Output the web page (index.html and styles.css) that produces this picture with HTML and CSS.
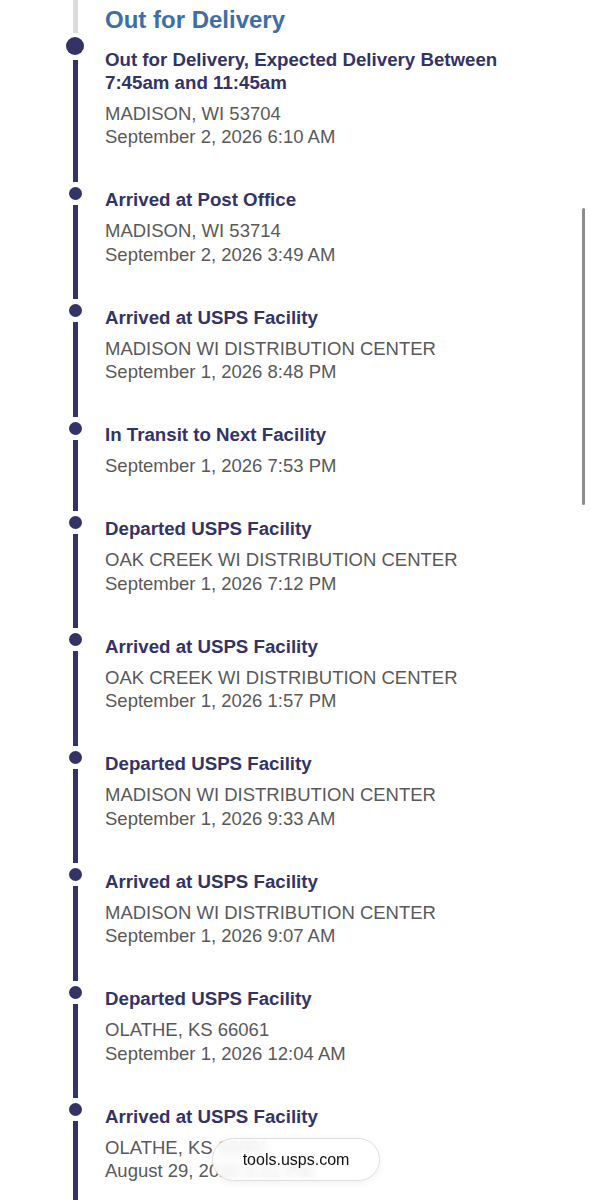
FILE: index.html
```html
<!DOCTYPE html>
<html lang="en">
<head>
    <meta charset="UTF-8">
    <meta name="viewport" content="width=device-width, initial-scale=1.0">
    <title>USPS Tracking</title>
    <link rel="stylesheet" href="styles.css">
</head>
<body>

    <section class="tracking">
        <!-- current status -->
        <div class="status-row">
            <div class="rail"><span class="rail-line rail-line--done"></span></div>
            <h2 class="status-title">Out for Delivery</h2>
        </div>

        <ol class="events">
            <li class="event event--current">
                <div class="rail">
                    <span class="dot"></span>
                    <span class="rail-line"></span>
                </div>
                <div class="event-body">
                    <p class="event-title">Out for Delivery, Expected Delivery Between 7:45am and 11:45am</p>
                    <p class="event-text">MADISON, WI 53704</p>
                    <p class="event-text">September 2, 2026 6:10 AM</p>
                </div>
            </li>

            <li class="event">
                <div class="rail">
                    <span class="dot"></span>
                    <span class="rail-line"></span>
                </div>
                <div class="event-body">
                    <p class="event-title">Arrived at Post Office</p>
                    <p class="event-text">MADISON, WI 53714</p>
                    <p class="event-text">September 2, 2026 3:49 AM</p>
                </div>
            </li>

            <li class="event">
                <div class="rail">
                    <span class="dot"></span>
                    <span class="rail-line"></span>
                </div>
                <div class="event-body">
                    <p class="event-title">Arrived at USPS Facility</p>
                    <p class="event-text">MADISON WI DISTRIBUTION CENTER</p>
                    <p class="event-text">September 1, 2026 8:48 PM</p>
                </div>
            </li>

            <li class="event">
                <div class="rail">
                    <span class="dot"></span>
                    <span class="rail-line"></span>
                </div>
                <div class="event-body">
                    <p class="event-title">In Transit to Next Facility</p>
                    <p class="event-text">September 1, 2026 7:53 PM</p>
                </div>
            </li>

            <li class="event">
                <div class="rail">
                    <span class="dot"></span>
                    <span class="rail-line"></span>
                </div>
                <div class="event-body">
                    <p class="event-title">Departed USPS Facility</p>
                    <p class="event-text">OAK CREEK WI DISTRIBUTION CENTER</p>
                    <p class="event-text">September 1, 2026 7:12 PM</p>
                </div>
            </li>

            <li class="event">
                <div class="rail">
                    <span class="dot"></span>
                    <span class="rail-line"></span>
                </div>
                <div class="event-body">
                    <p class="event-title">Arrived at USPS Facility</p>
                    <p class="event-text">OAK CREEK WI DISTRIBUTION CENTER</p>
                    <p class="event-text">September 1, 2026 1:57 PM</p>
                </div>
            </li>

            <li class="event">
                <div class="rail">
                    <span class="dot"></span>
                    <span class="rail-line"></span>
                </div>
                <div class="event-body">
                    <p class="event-title">Departed USPS Facility</p>
                    <p class="event-text">MADISON WI DISTRIBUTION CENTER</p>
                    <p class="event-text">September 1, 2026 9:33 AM</p>
                </div>
            </li>

            <li class="event">
                <div class="rail">
                    <span class="dot"></span>
                    <span class="rail-line"></span>
                </div>
                <div class="event-body">
                    <p class="event-title">Arrived at USPS Facility</p>
                    <p class="event-text">MADISON WI DISTRIBUTION CENTER</p>
                    <p class="event-text">September 1, 2026 9:07 AM</p>
                </div>
            </li>

            <li class="event">
                <div class="rail">
                    <span class="dot"></span>
                    <span class="rail-line"></span>
                </div>
                <div class="event-body">
                    <p class="event-title">Departed USPS Facility</p>
                    <p class="event-text">OLATHE, KS 66061</p>
                    <p class="event-text">September 1, 2026 12:04 AM</p>
                </div>
            </li>

            <li class="event">
                <div class="rail">
                    <span class="dot"></span>
                    <span class="rail-line"></span>
                </div>
                <div class="event-body">
                    <p class="event-title">Arrived at USPS Facility</p>
                    <p class="event-text">OLATHE, KS 66061</p>
                    <p class="event-text">August 29, 2026 6:21 PM</p>
                </div>
            </li>
        </ol>
    </section>

    <!-- browser chrome overlays -->
    <div class="scroll-thumb"></div>
    <div class="url-pill">tools.usps.com</div>

</body>
</html>
```

FILE: styles.css
```css
html, body {
    margin: 0;
    padding: 0;
    overflow: hidden;
    height: 100%;
}

body {
    font-family: "Liberation Sans", Arial, Helvetica, sans-serif;
    background-color: #fff;
}

.tracking {
    padding: 0 60px 0 45px;
}

/* rail column */
.rail {
    width: 60px;
    flex: 0 0 60px;
    display: flex;
    flex-direction: column;
    align-items: center;
}

.rail-line {
    display: block;
    width: 5px;
    flex: 1;
    background-color: #333366;
}

.rail-line--done {
    background-color: #dcdcdc;
}

.dot {
    display: block;
    width: 13px;
    height: 13px;
    border-radius: 50%;
    background-color: #333366;
    margin: 5px 0;
}

/* header */
.status-row {
    display: flex;
    height: 33px;
}

.status-title {
    margin: 0;
    padding-top: 6px;
    font-size: 24px;
    line-height: 27px;
    font-weight: bold;
    color: #3d6ea9;
    white-space: nowrap;
}

/* events */
.events {
    list-style: none;
    margin: 0;
    padding: 0;
}

.event {
    display: flex;
}

.event-body {
    flex: 1;
    padding: 6.75px 0 32.75px;
}

.event-body p {
    margin: 0;
    font-size: 18.5px;
    line-height: 23.5px;
}

.event-body .event-title {
    font-size: 18.7px;
    font-weight: bold;
    color: #333366;
    margin-bottom: 7.5px;
}

.event-text {
    color: #595959;
}

.event--current .dot {
    width: 18px;
    height: 18px;
    margin-top: 4px;
}

.event--current .event-body {
    padding-top: 15.25px;
}

.event--current .event-body .event-title {
    line-height: 23px;
}

/* overlays */
.scroll-thumb {
    position: fixed;
    left: 582px;
    top: 208px;
    width: 3px;
    height: 297px;
    border-radius: 2px;
    background-color: #8c8c8c;
}

.url-pill {
    position: fixed;
    left: 212px;
    top: 1138px;
    width: 168px;
    height: 43px;
    box-sizing: border-box;
    border: 1px solid #dedede;
    border-radius: 22px;
    background-color: rgba(255, 255, 255, 0.82);
    backdrop-filter: blur(5px);
    box-shadow: 0 2px 8px rgba(0, 0, 0, 0.06);
    display: flex;
    align-items: center;
    justify-content: center;
    font-size: 16px;
    color: #111;
}
```
